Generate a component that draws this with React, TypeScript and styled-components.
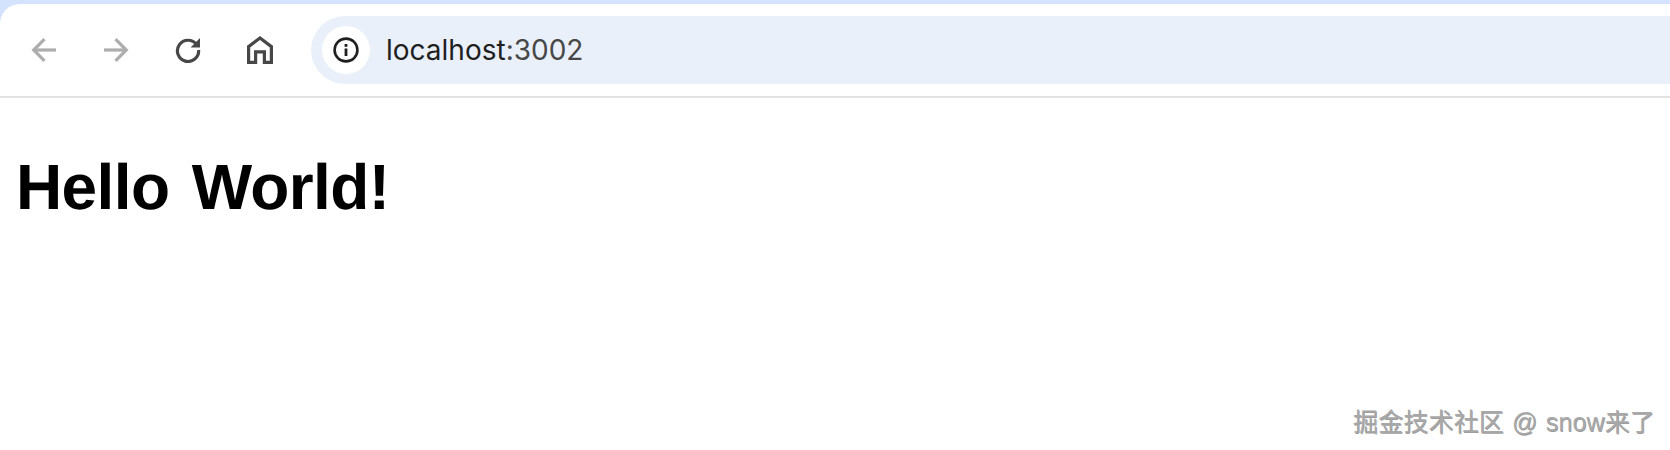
import styled, { createGlobalStyle } from 'styled-components'

const GlobalStyle = createGlobalStyle`
  html, body {
    margin: 0;
    padding: 0;
    background: #fff;
  }
  body {
    font-family: "Liberation Sans", Arial, sans-serif;
  }
`

const Page = styled.div`
  width: 1670px;
  height: 450px;
  display: flex;
  flex-direction: column;
  overflow: hidden;
  background: #d3e3fd;
`

const Toolbar = styled.div`
  margin-top: 4px;
  height: 92px;
  flex-shrink: 0;
  display: flex;
  align-items: center;
  padding-left: 26px;
  background: #fff;
  border-top-left-radius: 20px;
  border-bottom: 2px solid #e2e3e1;
`

const NavButton = styled.div`
  width: 36px;
  height: 36px;
  margin-right: 36px;
  display: flex;
  align-items: center;
  justify-content: center;
  flex-shrink: 0;
  &:last-of-type {
    margin-right: 0;
  }
`

const AddressBar = styled.div`
  flex: 1;
  height: 68px;
  margin-left: -3px;
  padding-left: 11px;
  display: flex;
  align-items: center;
  background: #eaf0f9;
  border-radius: 34px 0 0 34px;
`

const InfoChip = styled.div`
  width: 48px;
  height: 48px;
  border-radius: 50%;
  background: #fff;
  display: flex;
  align-items: center;
  justify-content: center;
  flex-shrink: 0;
`

const Url = styled.div`
  margin-left: 16px;
  font-family: Inter, "Noto Sans", sans-serif;
  font-size: 28px;
  line-height: 32px;
  color: #1f1f1f;
  span {
    color: #474747;
  }
`

const Content = styled.main`
  flex: 1;
  position: relative;
  background: #fff;
  padding: 52px 0 0 16px;
`

const Heading = styled.h1`
  margin: 0;
  font-family: "Liberation Sans", Arial, sans-serif;
  font-size: 64px;
  line-height: 74px;
  font-weight: 700;
  letter-spacing: -0.6px;
  word-spacing: 5px;
  text-rendering: geometricPrecision;
  color: #000;
`

const Watermark = styled.div`
  position: absolute;
  right: 15px;
  bottom: 12px;
  font-family: "Liberation Sans", "Noto Sans CJK SC", sans-serif;
  font-size: 25px;
  line-height: 32px;
  letter-spacing: 0.15px;
  word-spacing: 1px;
  color: #a8a8a8;
  text-shadow: 0.7px 0.7px 0 rgba(60, 60, 60, 0.5);
  white-space: nowrap;
`

const BackIcon = () => (
  <svg width="26" height="26" viewBox="0 0 26 26" fill="none" stroke="#adadad" strokeWidth="3.2">
    <path d="M25 13H3" />
    <path d="M13.500 2.200L2.700 13l10.800 10.800" />
  </svg>
)

const ForwardIcon = () => (
  <svg width="26" height="26" viewBox="0 0 26 26" fill="none" stroke="#adadad" strokeWidth="3.2">
    <path d="M1 13h22" />
    <path d="M12.500 2.200L23.300 13 12.500 23.800" />
  </svg>
)

const ReloadIcon = () => (
  <svg width="26" height="26" viewBox="0 0 26 26" fill="none">
    <path d="M21.600 7.600A10.600 10.600 0 1 0 23.600 13" stroke="#474747" strokeWidth="3.200" />
    <path d="M25 1V10.400H15.600Z" fill="#474747" />
  </svg>
)

const HomeIcon = () => (
  <svg width="26" height="28" viewBox="0 0 26 28" fill="none" stroke="#474747" strokeWidth="3.200">
    <path d="M1.600 26.400V10.600L13 2l11.400 8.600V26.400H17.400V15.800H8.600V26.400Z" />
  </svg>
)

const InfoIcon = () => (
  <svg width="26" height="26" viewBox="0 0 26 26" fill="none">
    <circle cx="13" cy="13" r="11.400" stroke="#1f1f1f" strokeWidth="2.600" />
    <rect x="11.600" y="11.500" width="2.800" height="7.500" fill="#1f1f1f" />
    <rect x="11.600" y="7" width="2.800" height="2.800" fill="#1f1f1f" />
  </svg>
)

const App = () => {
  return (
    <Page>
      <GlobalStyle />
      <Toolbar>
        <NavButton><BackIcon /></NavButton>
        <NavButton><ForwardIcon /></NavButton>
        <NavButton><ReloadIcon /></NavButton>
        <NavButton><HomeIcon /></NavButton>
        <AddressBar>
          <InfoChip><InfoIcon /></InfoChip>
          <Url>localhost<span>:3002</span></Url>
        </AddressBar>
      </Toolbar>
      <Content>
        <Heading>Hello World!</Heading>
        <Watermark>掘金技术社区 @ snow来了</Watermark>
      </Content>
    </Page>
  )
}

export default App
